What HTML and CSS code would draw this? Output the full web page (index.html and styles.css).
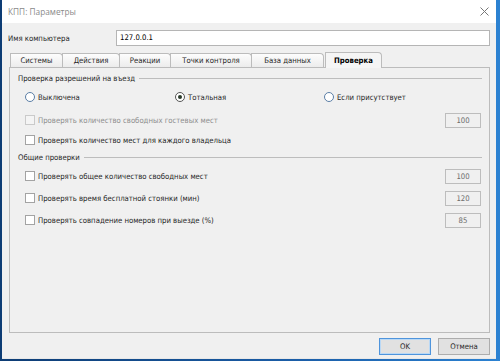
FILE: index.html
```html
<!DOCTYPE html>
<html lang="ru">
<head>
  <meta charset="UTF-8" />
  <title>КПП: Параметры</title>
  <link rel="stylesheet" href="styles.css">
</head>
<body>
  <div class="window">
    <div class="titlebar">
      <span class="title">КПП: Параметры</span>
      <svg class="close" width="9" height="9" viewBox="0 0 9 9">
        <path d="M0.5 0.5 L8.5 8.5 M8.5 0.5 L0.5 8.5" stroke="#777" stroke-width="1" fill="none" />
      </svg>
    </div>

    <div class="content">
      <div class="name-row">
        <span class="name-label">Имя компьютера</span>
        <div class="textbox">127.0.0.1</div>
      </div>

      <div class="tabs">
        <div class="tab">Системы</div>
        <div class="tab">Действия</div>
        <div class="tab">Реакции</div>
        <div class="tab">Точки контроля</div>
        <div class="tab">База данных</div>
        <div class="tab active">Проверка</div>
      </div>

      <div class="panel">
        <div class="group-title"><span>Проверка разрешений на въезд</span></div>
        <div class="radios">
          <div class="radio-item"><span class="radio"></span>Выключена</div>
          <div class="radio-item"><span class="radio checked"></span>Тотальная</div>
          <div class="radio-item"><span class="radio"></span>Если присутствует</div>
        </div>
        <div class="row first disabled">
          <span class="check"></span>
          <span class="row-label">Проверять количество свободных гостевых мест</span>
          <span class="num">100</span>
        </div>
        <div class="row">
          <span class="check"></span>
          <span class="row-label">Проверять количество мест для каждого владельца</span>
        </div>

        <div class="group-title second"><span>Общие проверки</span></div>
        <div class="row tall">
          <span class="check"></span>
          <span class="row-label">Проверять общее количество свободных мест</span>
          <span class="num">100</span>
        </div>
        <div class="row tall">
          <span class="check"></span>
          <span class="row-label">Проверять время бесплатной стоянки (мин)</span>
          <span class="num">120</span>
        </div>
        <div class="row tall">
          <span class="check"></span>
          <span class="row-label">Проверять совпадение номеров при выезде (%)</span>
          <span class="num">85</span>
        </div>
      </div>

      <div class="buttons">
        <button class="btn default">OK</button>
        <button class="btn">Отмена</button>
      </div>
    </div>
  </div>
</body>
</html>
```

FILE: styles.css
```css
/* Reset */
* {
  margin: 0;
  padding: 0;
  box-sizing: border-box;
}

body {
  width: 500px;
  height: 361px;
  overflow: hidden;
  background: linear-gradient(to right, #0d3c74 0%, #1b5ea8 60%, #2c82d2 100%);
  font-family: 'DejaVu Sans Condensed', 'DejaVu Sans', sans-serif;
  font-size: 7.7px;
  color: #262626;
}

.window {
  margin-left: 2px;
  width: 494px;
  height: 358px;
  background-color: #f0f0f0;
  display: flex;
  flex-direction: column;
  box-shadow: 0 1px 0 #e8e8e8;
}

/* Title bar */
.titlebar {
  height: 23px;
  background-color: #fff;
  display: flex;
  align-items: center;
  justify-content: space-between;
  padding: 0 6px 0 6px;
}

.title {
  font-family: 'Open Sans', sans-serif;
  font-size: 8.3px;
  color: #8a8a8a;
}

.close {
  margin-right: 1px;
}

.content {
  flex: 1;
  display: flex;
  flex-direction: column;
  padding: 7px 6px 0 6px;
}

/* Computer name */
.name-row {
  display: flex;
  align-items: center;
  height: 16px;
}

.name-label {
  width: 108px;
}

.textbox {
  flex: 1;
  height: 16px;
  background-color: #fff;
  border: 1px solid #b5b5b5;
  padding: 0 3px;
  line-height: 14px;
  color: #000;
}

/* Tabs */
.tabs {
  display: flex;
  align-items: flex-end;
  margin-top: 6px;
  height: 15px;
  padding-left: 2px;
}

.tab {
  height: 14px;
  line-height: 13px;
  text-align: center;
  white-space: nowrap;
  border: 1px solid #bcbcbc;
  border-bottom: none;
  border-top-right-radius: 4px;
  background: linear-gradient(#fdfdfd, #ececec);
  margin-right: -1px;
}

.tab:nth-child(1) { width: 53px; }
.tab:nth-child(2) { width: 58px; }
.tab:nth-child(3) { width: 52px; }
.tab:nth-child(4) { width: 82px; }
.tab:nth-child(5) { width: 73px; margin-right: 1px; }

.tab.active {
  width: 57px;
  height: 16px;
  line-height: 15px;
  font-weight: bold;
  color: #000;
  background: #f5f5f5;
  position: relative;
  top: 1px;
  z-index: 1;
}

/* Panel */
.panel {
  margin-left: 1px;
  height: 266px;
  border: 1px solid #bcbcbc;
  padding: 4px 7px 0 8px;
  display: flex;
  flex-direction: column;
}

.group-title {
  display: flex;
  align-items: center;
  height: 12px;
}

.group-title::after {
  content: "";
  flex: 1;
  height: 1px;
  background-color: #bdbdbd;
  margin-left: 4px;
}

.group-title.second {
  margin-top: 1px;
}

.radios {
  display: grid;
  grid-template-columns: 150px 149px 1fr;
  margin-top: 3px;
  height: 20px;
  align-items: center;
  padding-left: 7px;
}

.radio-item {
  display: flex;
  align-items: center;
}

.radio {
  width: 10px;
  height: 10px;
  border-radius: 50%;
  border: 1px solid #5a7ea6;
  background-color: #fff;
  margin-right: 3px;
  display: flex;
  align-items: center;
  justify-content: center;
}

.radio.checked {
  border-color: #555;
}

.radio.checked::after {
  content: "";
  width: 4px;
  height: 4px;
  border-radius: 50%;
  background-color: #2a3a2a;
}

.row {
  display: flex;
  align-items: center;
  height: 20px;
  padding-left: 7px;
}

.row.first {
  margin-top: 3px;
}

.row.tall {
  height: 22px;
}

.group-title.second + .row {
  margin-top: 2px;
}

.check {
  width: 10px;
  height: 10px;
  border: 1px solid #a3a3a3;
  background-color: #fff;
  margin-right: 3px;
  flex: none;
}

.row-label {
  flex: 1;
}

.row.disabled .check {
  border-color: #cacaca;
  background-color: #f4f4f4;
}

.row.disabled .row-label {
  color: #8d8d8d;
}

.num {
  width: 36px;
  height: 15px;
  border: 1px solid #bdbdbd;
  background-color: #f0f0f0;
  color: #6d6d6d;
  text-align: center;
  line-height: 13px;
  margin-right: 1px;
}

/* Buttons */
.buttons {
  display: flex;
  justify-content: flex-end;
  gap: 7px;
  margin-top: 5px;
}

.btn {
  width: 52px;
  height: 17px;
  font-family: 'DejaVu Sans Condensed', 'DejaVu Sans', sans-serif;
  font-size: 7.7px;
  color: #262626;
  background-color: #e1e1e1;
  border: 1px solid #adadad;
}

.btn.default {
  border-color: #4e94dc;
  box-shadow: inset 0 0 0 1px #b9d8f5;
}
```
